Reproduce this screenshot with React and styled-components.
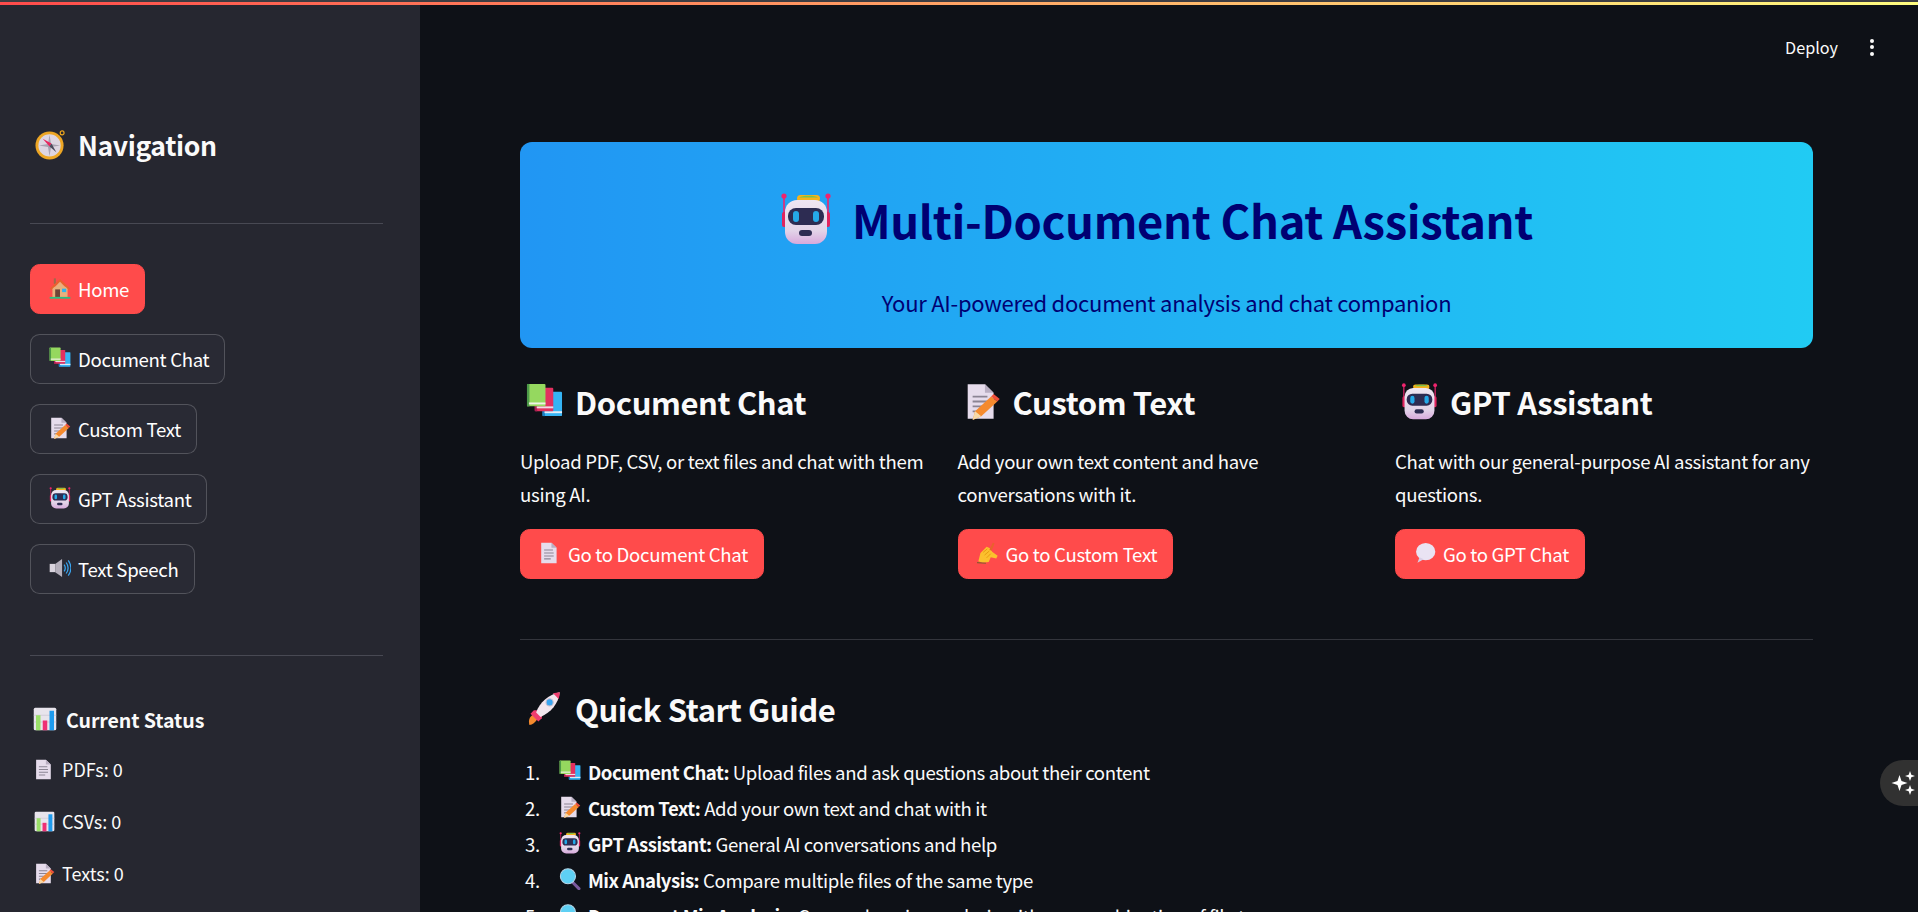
import React, { useId } from "react";
import styled, { createGlobalStyle } from "styled-components";

const GlobalStyle = createGlobalStyle`
  html, body {
    margin: 0;
    height: 912px;
    overflow: hidden;
    background: #0e1117;
  }
  * { box-sizing: border-box; }
`;

// emoji drawings, there is no colour emoji font on the page
function Svg({ size, box = "0 0 32 32", children }) {
  return (
    <svg width={size} height={size} viewBox={box} aria-hidden="true">
      {children}
    </svg>
  );
}

function Robot({ size }) {
  const id = useId();
  return (
    <Svg size={size} box="5 6 52 52">
      <defs>
        <linearGradient id={id} x1="0" y1="0" x2="0" y2="1">
          <stop offset="0" stopColor="#efe6f2" />
          <stop offset="0.7" stopColor="#e2d3e8" />
          <stop offset="1" stopColor="#d8a9dc" />
        </linearGradient>
      </defs>
      <path d="M9 9v22M53 9v22" stroke="#f0246e" strokeWidth="1.6" fill="none" />
      <circle cx="9" cy="9" r="2.6" fill="#f0246e" />
      <circle cx="53" cy="9" r="2.6" fill="#f0246e" />
      <rect x="7" y="25" width="5" height="15" rx="2" fill="#e0245e" />
      <rect x="50" y="25" width="5" height="15" rx="2" fill="#e0245e" />
      <rect x="22" y="8" width="23" height="7" rx="3.5" fill="#f7b21c" />
      <path d="M24 10.5c3-2.5 16-2.5 19 0z" fill="#7cc24a" />
      <rect x="10" y="13" width="42" height="44" rx="12" fill={`url(#${id})`} />
      <rect x="13" y="21" width="36" height="17" rx="8" fill="#2d2c52" />
      <rect x="18" y="24" width="6" height="11" rx="3" fill="#25a9e8" />
      <rect x="38" y="24" width="6" height="11" rx="3" fill="#25a9e8" />
      <rect x="24" y="43" width="13" height="6" rx="3" fill="#2d2c52" />
    </Svg>
  );
}

function Books({ size }) {
  return (
    <Svg size={size} box="6 8 38 38">
      <rect x="23" y="17" width="20" height="25" rx="1" fill="#35b4f4" />
      <rect x="23" y="17" width="2.5" height="25" fill="#1c7fc4" />
      <rect x="25" y="37" width="18" height="2" fill="#e8eef6" />
      <rect x="15" y="13" width="19" height="24" rx="1" fill="#e2305f" />
      <rect x="15" y="13" width="2.5" height="24" fill="#a91f52" />
      <rect x="17" y="32" width="17" height="2" fill="#f1dbe6" />
      <rect x="7" y="9" width="19" height="23" rx="1" fill="#95d85f" />
      <rect x="7" y="9" width="2.5" height="23" fill="#4c9a49" />
      <rect x="9" y="28" width="17" height="2" fill="#eef2e6" />
    </Svg>
  );
}

function Doc({ size, pencil }) {
  return (
    <Svg size={size} box="3 1 30 30">
      <path d="M6 2h14l7 7v21H6z" fill="#e6dcec" />
      <path d="M20 2l7 7h-7z" fill="#b9aec2" />
      <path d="M10 12h12M10 16h13M10 20h13M10 24h9" stroke="#8b8494" strokeWidth="1.5" />
      {pencil && (
        <>
          <path d="M10 31l2-7L25 12l5 4-13 12z" fill="#f58a2e" />
          <path d="M25 12l2-2 5 4-2 2z" fill="#f0503c" />
          <path d="M10 31l2-7 5 4z" fill="#f7d9a8" />
        </>
      )}
    </Svg>
  );
}

function Chart({ size }) {
  return (
    <Svg size={size}>
      <rect x="1" y="1" width="30" height="30" rx="2" fill="#e8e4ec" />
      <path d="M1 11h30M1 20h30" stroke="#c9c4d2" strokeWidth="1" />
      <rect x="4" y="11" width="6" height="20" fill="#9be06a" />
      <rect x="13" y="18" width="6" height="13" fill="#ee2f74" />
      <rect x="22" y="5" width="6" height="26" fill="#1e9bee" />
    </Svg>
  );
}

function Compass({ size }) {
  return (
    <Svg size={size}>
      <circle cx="28" cy="4" r="2" fill="none" stroke="#f0a81e" strokeWidth="1.2" />
      <circle cx="15" cy="17" r="14.5" fill="#eda624" />
      <circle cx="15" cy="17" r="11.5" fill="#ded6e2" />
      <path d="M15 6l1.6 9.4L26 17l-9.4 1.6L15 28l-1.6-9.4L4 17l9.4-1.6z" fill="#a9a3b2" />
      <path d="M8 10l9 5-2 3z" fill="#e8265f" />
      <path d="M22 24l-7-6 2-3z" fill="#4b4a5c" />
    </Svg>
  );
}

function House({ size }) {
  return (
    <Svg size={size}>
      <rect x="7" y="2" width="3" height="8" fill="#a0694a" />
      <rect x="5" y="14" width="22" height="15" fill="#e8b07c" />
      <path d="M1 17L16 3l15 14-2 2L16 7 3 19z" fill="#e8622d" />
      <path d="M16 7l11 11H5z" fill="#e8b07c" />
      <rect x="9" y="18" width="7" height="11" fill="#6e4438" />
      <rect x="19" y="17" width="6" height="5" fill="#2fb4ee" />
      <rect x="1" y="29" width="30" height="2.5" fill="#26c281" />
    </Svg>
  );
}

function Speaker({ size }) {
  return (
    <Svg size={size}>
      <rect x="1" y="10" width="8" height="12" fill="#d9d4de" />
      <path d="M9 10l10-7v26l-10-7z" fill="#b5b0bc" />
      <path d="M22 11c2 3 2 7 0 10M25 8c3.5 5 3.5 11 0 16M28 5c5 7 5 15 0 22" stroke="#3aa5f0" strokeWidth="1.8" fill="none" />
    </Svg>
  );
}

function WritingHand({ size }) {
  return (
    <Svg size={size}>
      <path d="M2 28l3-12 9-9 5 2 3 5 8 6-2 4-8-2-3 7-9 1z" fill="#fbc02d" />
      <path d="M9 15l6-5M11 19l7-6M14 23l6-6" stroke="#e69a10" strokeWidth="1.4" />
      <path d="M18 11L23 1l2.5 1.2L21 13z" fill="#e8622d" />
      <path d="M0 30l13 1" stroke="#8a5a2e" strokeWidth="1.6" />
    </Svg>
  );
}

function Balloon({ size }) {
  return (
    <Svg size={size}>
      <ellipse cx="17" cy="14" rx="14" ry="12.5" fill="#eae3f3" />
      <path d="M8 22l-3 8 9-5z" fill="#d8cfe6" />
    </Svg>
  );
}

function Rocket({ size }) {
  return (
    <Svg size={size}>
      <path d="M3 31c-1-4 0-7 3-9l4 4c-2 3-4 5-7 5z" fill="#f58a2e" />
      <path d="M7 18l-3 3 7 7 3-3 1-7z" fill="#ee3d6e" />
      <path d="M9 20C12 11 20 4 30 2c-1 10-8 18-17 22z" fill="#f2e6ee" />
      <path d="M24 2.8L30 2c0 2-.4 4-1 6z" fill="#ee3d6e" />
      <circle cx="21" cy="11" r="3.2" fill="#3aa5f0" stroke="#c8c0d0" />
    </Svg>
  );
}

function Magnifier({ size }) {
  return (
    <Svg size={size}>
      <path d="M19 20l10 10" stroke="#7a5a9c" strokeWidth="4.5" strokeLinecap="round" />
      <circle cx="13" cy="12" r="11" fill="#5ed0f4" stroke="#b4d6e8" strokeWidth="1.5" />
    </Svg>
  );
}

const NAV_ITEMS = [
  { label: "Home", Icon: House, active: true },
  { label: "Document Chat", Icon: Books },
  { label: "Custom Text", Icon: Doc, pencil: true },
  { label: "GPT Assistant", Icon: Robot },
  { label: "Text Speech", Icon: Speaker },
];

const STATUS = [
  { label: "PDFs: 0", Icon: Doc },
  { label: "CSVs: 0", Icon: Chart },
  { label: "Texts: 0", Icon: Doc, pencil: true },
];

const CARDS = [
  {
    title: "Document Chat",
    Icon: Books,
    text: "Upload PDF, CSV, or text files and chat with them using AI.",
    button: "Go to Document Chat",
    ButtonIcon: Doc,
  },
  {
    title: "Custom Text",
    Icon: Doc,
    pencil: true,
    text: "Add your own text content and have conversations with it.",
    button: "Go to Custom Text",
    ButtonIcon: WritingHand,
  },
  {
    title: "GPT Assistant",
    Icon: Robot,
    text: "Chat with our general-purpose AI assistant for any questions.",
    button: "Go to GPT Chat",
    ButtonIcon: Balloon,
  },
];

const STEPS = [
  { name: "Document Chat", Icon: Books, text: "Upload files and ask questions about their content" },
  { name: "Custom Text", Icon: Doc, pencil: true, text: "Add your own text and chat with it" },
  { name: "GPT Assistant", Icon: Robot, text: "General AI conversations and help" },
  { name: "Mix Analysis", Icon: Magnifier, text: "Compare multiple files of the same type" },
  { name: "Document Mix Analysis", Icon: Magnifier, text: "Comprehensive analysis with any combination of file types" },
];

export default function App() {
  return (
    <Shell>
      <GlobalStyle />
      <TopLine />
      <Body>
        <Sidebar>
          <NavTitle>
            <Slot $w={48} $pad={5}><Compass size={31} /></Slot>
            Navigation
          </NavTitle>
          <SideRule $top={59} />
          <NavList>
            {NAV_ITEMS.map(({ label, Icon, active, pencil }) => (
              <PillButton key={label} $primary={active}>
                <Slot $w={32} $pad={3}><Icon size={22} pencil={pencil} /></Slot>
                {label}
              </PillButton>
            ))}
          </NavList>
          <SideRule $top={61} />
          <StatusTitle>
            <Slot $w={36} $pad={3}><Chart size={24} /></Slot>
            Current Status
          </StatusTitle>
          <StatusList>
            {STATUS.map(({ label, Icon, pencil }) => (
              <StatusItem key={label}>
                <Slot $w={32} $pad={4}><Icon size={21} pencil={pencil} /></Slot>
                {label}
              </StatusItem>
            ))}
          </StatusList>
        </Sidebar>

        <Main>
          <Header>
            <DeployLink>Deploy</DeployLink>
            <Dots>
              <i /><i /><i />
            </Dots>
          </Header>

          <Content>
            <Hero>
              <HeroTitle>
                <HeroIcon><Robot size={52} /></HeroIcon>
                Multi-Document Chat Assistant
              </HeroTitle>
              <HeroSub>Your AI-powered document analysis and chat companion</HeroSub>
            </Hero>

            <Cards>
              {CARDS.map(({ title, Icon, pencil, text, button, ButtonIcon }) => (
                <Card key={title}>
                  <SectionTitle>
                    <Slot $w={55} $pad={6}><Icon size={37} pencil={pencil} /></Slot>
                    {title}
                  </SectionTitle>
                  <CardText>{text}</CardText>
                  <PillButton $primary>
                    <Slot $w={32} $pad={3}><ButtonIcon size={22} /></Slot>
                    {button}
                  </PillButton>
                </Card>
              ))}
            </Cards>

            <MainRule />

            <SectionTitle>
              <Slot $w={55} $pad={6}><Rocket size={36} /></Slot>
              Quick Start Guide
            </SectionTitle>

            <Steps>
              {STEPS.map(({ name, Icon, pencil, text }, i) => (
                <Step key={name}>
                  <StepNumber>{i + 1}.</StepNumber>
                  <Slot $w={33} $pad={4}><Icon size={22} pencil={pencil} /></Slot>
                  <span><strong>{name}:</strong> {text}</span>
                </Step>
              ))}
            </Steps>
          </Content>
        </Main>
      </Body>

      <SparkleTab>
        <svg width="26" height="26" viewBox="0 0 26 26" aria-hidden="true">
          <path d="M9.5 5l2 6 6 2-6 2-2 6-2-6-6-2 6-2z" fill="#fff" />
          <path d="M20 1l1.3 3.7L25 6l-3.7 1.3L20 11l-1.3-3.7L15 6l3.7-1.3z" fill="#fff" />
          <path d="M20 15l1.3 3.7L25 20l-3.7 1.3L20 25l-1.3-3.7L15 20l3.7-1.3z" fill="#fff" />
        </svg>
      </SparkleTab>
    </Shell>
  );
}

const Shell = styled.div`
  position: relative;
  display: flex;
  flex-direction: column;
  height: 912px;
  overflow: hidden;
  color: #fafafa;
  font-family: "Noto Sans CJK SC", "Noto Sans", sans-serif;
  font-size: 18.6px;
  letter-spacing: -0.3px;
`;

const TopLine = styled.div`
  flex: none;
  height: 5px;
  border-top: 2px solid #3d3d42;
  background: linear-gradient(90deg, #ff4b4b, #fffd80);
`;

const Body = styled.div`
  flex: 1;
  display: flex;
  min-height: 0;
`;

const Sidebar = styled.aside`
  flex: none;
  width: 420px;
  padding: 119px 37px 0 30px;
  background: #262730;
`;

const Slot = styled.span`
  flex: none;
  display: inline-flex;
  align-items: center;
  width: ${(p) => p.$w}px;
  padding-left: ${(p) => p.$pad || 0}px;
`;

const NavTitle = styled.h2`
  display: flex;
  align-items: center;
  height: 40px;
  margin: 0;
  font-size: 26.6px;
  font-weight: 600;
  letter-spacing: -0.4px;
`;

const SideRule = styled.hr`
  height: 1px;
  margin: ${(p) => p.$top}px 0 0;
  border: 0;
  background: #484953;
`;

const NavList = styled.div`
  display: flex;
  flex-direction: column;
  align-items: flex-start;
  gap: 20px;
  margin-top: 40px;
`;

const PillButton = styled.button`
  display: inline-flex;
  align-items: center;
  height: 50px;
  padding: 0 15px 2px;
  border-radius: 9.6px;
  border: 1px solid ${(p) => (p.$primary ? "#ff4b4b" : "rgba(250, 250, 250, 0.2)")};
  background: ${(p) => (p.$primary ? "#ff4b4b" : "#292a34")};
  color: #fff;
  font: inherit;
  letter-spacing: inherit;
`;

const StatusTitle = styled.h3`
  display: flex;
  align-items: center;
  height: 30px;
  margin: 48px 0 0;
  font-size: 19.6px;
  font-weight: 600;
  letter-spacing: -0.1px;
`;

const StatusList = styled.div`
  display: flex;
  flex-direction: column;
  gap: 28px;
  margin-top: 23px;
`;

const StatusItem = styled.div`
  display: flex;
  align-items: center;
  height: 24px;
  font-size: 18px;
  letter-spacing: 0;
`;

const Main = styled.main`
  flex: 1;
  min-width: 0;
`;

const Header = styled.header`
  display: flex;
  align-items: center;
  justify-content: flex-end;
  gap: 32px;
  height: 84px;
  padding-right: 44px;
`;

const DeployLink = styled.span`
  font-size: 16.2px;
  letter-spacing: 0;
`;

const Dots = styled.span`
  display: flex;
  flex-direction: column;
  gap: 2.5px;

  i {
    width: 4px;
    height: 4px;
    border-radius: 50%;
    background: #fafafa;
  }
`;

const Content = styled.div`
  padding: 53px 105px 0 100px;
`;

const Hero = styled.section`
  display: flex;
  flex-direction: column;
  align-items: center;
  height: 206px;
  padding-top: 46px;
  border-radius: 12px;
  background: linear-gradient(90deg, #2196f3, #21cbf3);
  color: #000072;
`;

const HeroTitle = styled.h1`
  display: flex;
  align-items: center;
  height: 62px;
  margin: 0;
  padding-right: 20px;
  font-size: 45.3px;
  font-weight: 700;
  letter-spacing: -0.3px;
`;

const HeroIcon = styled.span`
  display: inline-flex;
  margin-right: 20px;
`;

const HeroSub = styled.p`
  margin: 36px 0 0;
  line-height: 32px;
  font-size: 22px;
  letter-spacing: -0.25px;
`;

const Cards = styled.div`
  display: grid;
  grid-template-columns: repeat(3, 1fr);
  gap: 19.5px;
  margin-top: 29px;
`;

const Card = styled.div`
  display: flex;
  flex-direction: column;
  align-items: flex-start;
`;

const SectionTitle = styled.h3`
  display: flex;
  align-items: center;
  height: 48px;
  margin: 0;
  font-size: 31px;
  font-weight: 600;
  letter-spacing: -0.4px;
`;

const CardText = styled.p`
  margin: 20px 0 19px;
  line-height: 32.5px;
`;

const MainRule = styled.hr`
  height: 1px;
  margin: 60px 0 44px;
  border: 0;
  background: #33353c;
`;

const Steps = styled.ol`
  display: flex;
  flex-direction: column;
  gap: 5.5px;
  margin: 24px 0 0;
  padding: 0;
  list-style: none;
  letter-spacing: -0.36px;

  strong {
    letter-spacing: -0.5px;
  }
`;

const Step = styled.li`
  display: flex;
  align-items: center;
  height: 30.5px;
`;

const StepNumber = styled.span`
  flex: none;
  width: 35px;
  padding-left: 5px;
`;

const SparkleTab = styled.div`
  position: absolute;
  top: 760px;
  left: 1880px;
  display: flex;
  align-items: center;
  width: 60px;
  height: 46px;
  padding-left: 10px;
  border-radius: 23px;
  background: #313131;
`;
